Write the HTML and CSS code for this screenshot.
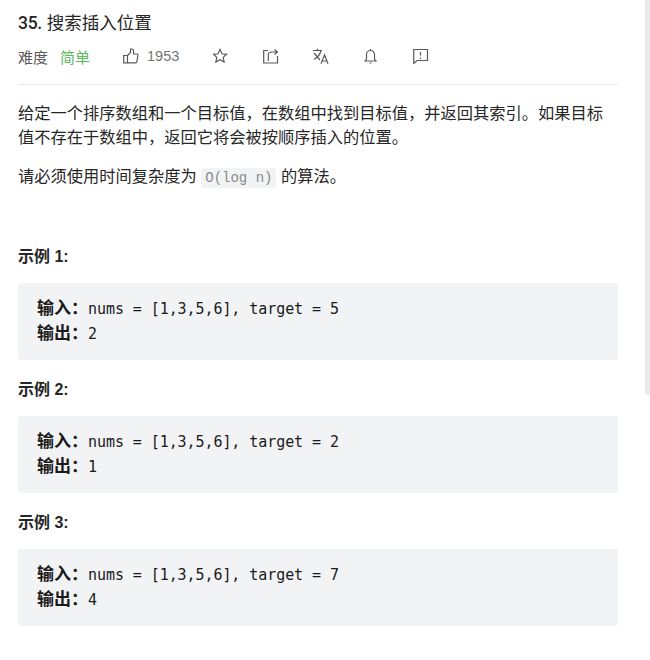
FILE: index.html
```html
<!DOCTYPE html>
<html lang="zh-CN">
<head>
    <meta charset="UTF-8">
    <meta name="viewport" content="width=device-width, initial-scale=1.0">
    <title>35. 搜索插入位置</title>
    <link rel="stylesheet" href="styles.css">
</head>
<body>
    <div class="scrollbar-thumb"></div>
    <div class="question">
        <h1 class="question-title"><span class="title-number">35.</span> 搜索插入位置</h1>
        <div class="question-meta">
            <span class="meta-label">难度</span>
            <span class="meta-easy">简单</span>
            <svg class="icon like" viewBox="0 0 16 16"><path d="M.7 7.500H4.500V14.800H.7ZM4.500 7.500L7.500 4.500V1H9a1.500 1.500 0 0 1 1.500 1.500V6H14a1 1 0 0 1 1 1.200L13.800 14a1 1 0 0 1-1 .8H4.500"/></svg>
            <span class="like-count">1953</span>
            <svg class="icon star" viewBox="0 0 16 16"><path d="M7 1.500L9 5.800 13.600 6.300 10.200 9.400 11.100 14 7 11.700 2.900 14 3.800 9.400 .4 6.300 5 5.800Z"/></svg>
            <svg class="icon action" viewBox="0 0 16 16"><path d="M5 2.500H.7V15H14.500V8M5.300 13V7Q5.300 4 8.500 4H14M11.500 1.500L14.500 4 11.500 6.500"/></svg>
            <svg class="icon action" viewBox="0 0 16 16"><path d="M0 2.500H9M4.500 .8V2.500M1 5L7 12M8 2.500C7 6.500 5 9.500 1 11.500M8 15.800L11.500 6.800 15 15.800M9 13H14"/></svg>
            <svg class="icon action" viewBox="0 0 16 16"><path d="M2 13H13L11.500 11V6.500A4 4 0 0 0 3.500 6.500V11ZM6.500 15H8.500M7.500 1V2.500"/></svg>
            <svg class="icon action" viewBox="0 0 16 16"><path d="M.7 1.500H14.500V12.500H4L.7 15.500ZM7.500 4V7.500M7.500 9.500V11"/></svg>
        </div>
        <div class="question-content">
            <p>给定一个排序数组和一个目标值，在数组中找到目标值，并返回其索引。如果目标值不存在于数组中，返回它将会被按顺序插入的位置。</p>
            <p>请必须使用时间复杂度为 <code>O(log n)</code> 的算法。</p>
            <h2 class="example-title first">示例 1:</h2>
            <pre class="example"><strong>输入：</strong>nums = [1,3,5,6], target = 5
<strong>输出：</strong>2</pre>
            <h2 class="example-title">示例 2:</h2>
            <pre class="example"><strong>输入：</strong>nums = [1,3,5,6], target = 2
<strong>输出：</strong>1</pre>
            <h2 class="example-title">示例 3:</h2>
            <pre class="example"><strong>输入：</strong>nums = [1,3,5,6], target = 7
<strong>输出：</strong>4</pre>
        </div>
    </div>
</body>
</html>
```

FILE: styles.css
```css
body {
    margin: 0;
    background: #fff;
    color: #262626;
    font-family: "Liberation Sans", "Noto Sans CJK SC", sans-serif;
    overflow: hidden;
}
.scrollbar-thumb {
    position: absolute;
    top: 0;
    right: 0;
    width: 5px;
    height: 395px;
    background: #ebebeb;
}
.question {
    width: 600px;
    padding: 11px 0 0 18px;
}
.question-title {
    margin: 0;
    font-size: 17.500px;
    font-weight: 400;
    line-height: 24px;
    color: #262626;
}
.title-number {
    font-family: Roboto, sans-serif;
    font-weight: 500;
    letter-spacing: -0.300px;
}
.question-meta {
    display: flex;
    align-items: center;
    height: 24px;
    margin-top: 9px;
    padding-bottom: 16px;
    border-bottom: 1px solid #e8e8e8;
    font-size: 15px;
    color: #595959;
}
.meta-easy {
    margin-left: 12px;
    color: #5cb85c;
}
.like {
    margin-left: 33px;
}
.like-count {
    margin-left: 8px;
    font-size: 14.500px;
    color: #737373;
}
.icon {
    flex: none;
    width: 16px;
    height: 16px;
    fill: none;
    stroke: #595959;
    stroke-width: 1.200;
}
.star {
    margin-left: 34px;
}
.action {
    margin-left: 34px;
}
.question-content {
    font-size: 16.250px;
    line-height: 24px;
    padding-top: 16px;
}
.question-content p {
    margin: 0 0 15px;
}
code {
    padding: 2px 4px;
    border-radius: 3px;
    background: #f2f3f4;
    color: #8a8a8a;
    font-family: "Liberation Mono", "DejaVu Sans Mono", monospace;
    font-size: 14px;
}
.example-title {
    margin: 0;
    font-size: 16px;
    font-weight: 700;
    line-height: 24px;
}
.example-title.first {
    margin-top: 55px;
}
.example {
    margin: 14px 0 18px;
    padding: 14px 19px 13px;
    border-radius: 3px;
    background: #f2f3f5;
    color: #1a1a1a;
    font-family: "DejaVu Sans Mono", monospace;
    font-size: 15px;
    letter-spacing: -0.070px;
    line-height: 25px;
}
strong {
    font-family: "Noto Sans CJK SC", sans-serif;
    font-size: 17px;
    font-weight: 700;
    letter-spacing: 0;
    line-height: 1;
}
```
